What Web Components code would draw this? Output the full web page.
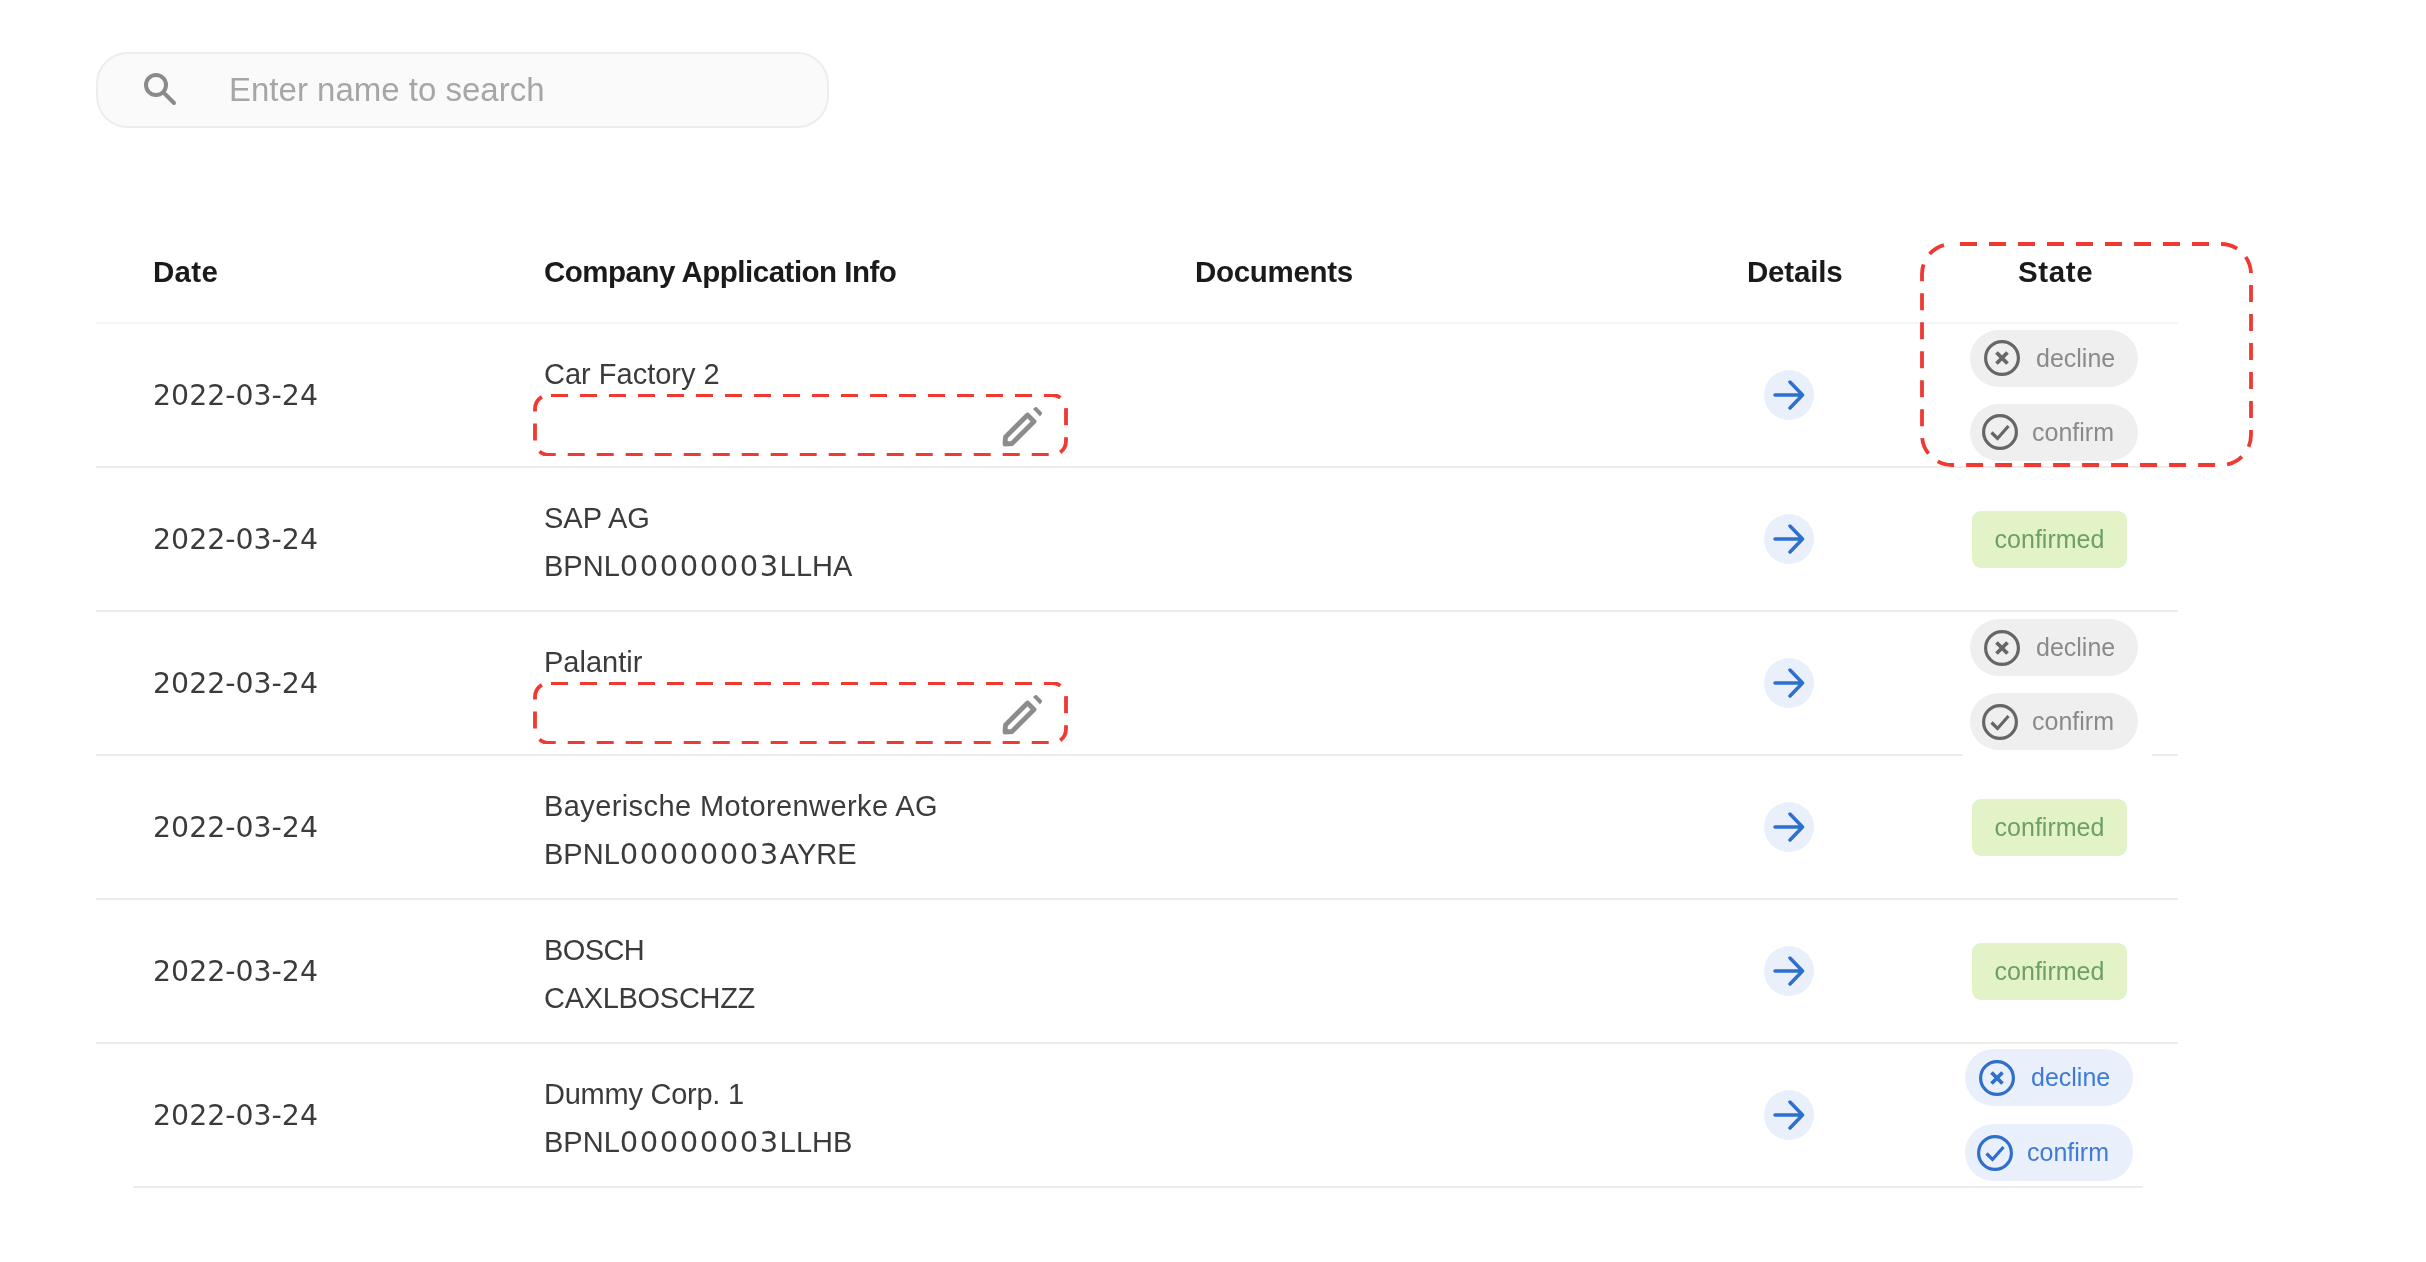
<!doctype html>
<html><head><meta charset="utf-8"><style>
html,body{margin:0;background:#fff}
body{font-family:"Liberation Sans",Arial,sans-serif;color:#3b3b3b}
</style></head><body>
<app-page>
  <search-field placeholder="Enter name to search"></search-field>
  <table-head></table-head>
  <row-rule soft></row-rule>
  <table-row date="2022-03-24" name="Car Factory 2" editable>
    <state-actions tone="grey"></state-actions>
  </table-row>
  <row-rule></row-rule>
  <table-row date="2022-03-24" name="SAP AG" code="BPNL00000003LLHA"><state-done></state-done></table-row>
  <row-rule></row-rule>
  <table-row date="2022-03-24" name="Palantir" editable>
    <state-actions tone="grey" low></state-actions>
  </table-row>
  <row-rule gap></row-rule>
  <table-row date="2022-03-24" name="Bayerische Motorenwerke AG" ls=".4" code="BPNL00000003AYRE"><state-done></state-done></table-row>
  <row-rule></row-rule>
  <table-row date="2022-03-24" name="BOSCH" ls="-.6" code="CAXLBOSCHZZ" cls="-.3"><state-done></state-done></table-row>
  <row-rule></row-rule>
  <table-row date="2022-03-24" name="Dummy Corp. 1" ls="-.25" code="BPNL00000003LLHB">
    <state-actions tone="blue"></state-actions>
  </table-row>
  <row-rule last></row-rule>
  <dash-frame></dash-frame>
</app-page>
<script>
const cols='grid-template-columns:448px 651px 552px 218px 213px;';
const def=(n,html)=>customElements.define(n,class extends HTMLElement{
  connectedCallback(){ if(this.shadowRoot)return; const s=this.attachShadow({mode:'open'}); s.innerHTML=typeof html==='function'?html(this):html; }
});
def('app-page',`<style>:host{display:block;position:relative;width:2426px;height:1262px;box-sizing:border-box;padding:52px 248px 0 96px;overflow:hidden;filter:blur(.7px)}</style><slot></slot>`);
def('search-field',el=>`<style>
:host{display:flex;align-items:center;box-sizing:border-box;width:733px;height:76px;border:2px solid #ededed;border-radius:32px;background:#fafafa;padding-left:42px;margin-bottom:95px}
svg{width:42px;height:42px;flex:none}
span{margin-left:47px;font-size:33px;color:#a6a6a6}
</style><svg viewBox="0 0 42 42" fill="none" stroke="#8a8a8a" stroke-width="4" stroke-linecap="round"><circle cx="16" cy="16" r="10"/><path d="M24 24 L34 34"/></svg><span>${el.getAttribute('placeholder')}</span>`);
def('table-head',`<style>
:host{display:grid;${cols}height:99px;align-items:center;font-weight:bold;font-size:29.5px;color:#1a1a1a}
div{padding-bottom:2px}
.d{padding-left:57px;letter-spacing:.3px}.s{padding-left:53px;letter-spacing:.6px}
.c{letter-spacing:-.5px}.o{letter-spacing:-.3px}.t{letter-spacing:-.2px}
</style><div class="d">Date</div><div class="c">Company Application Info</div><div class="o">Documents</div><div class="t">Details</div><div class="s">State</div>`);
def('table-row',el=>{
 const code=(el.getAttribute('code')||'').replace(/\d+/,m=>`<span class="n">${m}</span>`);
 return `<style>
:host{display:grid;${cols}height:142px;align-items:center;font-size:29px;color:#3b3b3b}
.d{padding-left:57px;font-family:"DejaVu Sans",sans-serif;font-size:28.4px}
.c{align-self:start;padding-top:26px;line-height:48px}
.c div{white-space:nowrap}
.n{font-family:"DejaVu Sans",sans-serif;letter-spacing:1.55px;font-size:29px}
.a{padding-left:17px}
</style><div class="d">${el.getAttribute('date')}</div>
<div class="c"><div style="letter-spacing:${el.getAttribute('ls')||0}px">${el.getAttribute('name')}</div>${el.hasAttribute('editable')?'<edit-box></edit-box>':`<div style="letter-spacing:${el.getAttribute('cls')||0}px">${code}</div>`}</div>
<div></div><div class="a"><go-arrow></go-arrow></div><div><slot></slot></div>`});
def('edit-box',`<style>
:host{display:flex;position:relative;box-sizing:border-box;width:535px;height:62px;margin:-4px 0 0 -11px;padding:13px 26px 0 0;justify-content:flex-end;align-items:flex-start}
.f{position:absolute;inset:0;width:100%;height:100%}
.p{width:40px;height:40px}
</style><svg class="f" viewBox="0 0 535 62" fill="none"><rect x="2" y="1" width="531" height="60" rx="14" stroke="#ee3a32" stroke-width="3.8" stroke-dasharray="17 12" stroke-dashoffset="-2"/></svg>
<svg class="p" viewBox="0 0 40 40" fill="none"><path d="M3 37 L3.500 30 L25.500 8 L32 14.500 L10 36.500 Z" stroke="#8c8c8c" stroke-width="4.800" stroke-linejoin="round"/><path d="M31 2 L34 -.5 L40.500 6 L38 9.500 Z" fill="#8c8c8c"/></svg>`);
def('go-arrow',`<style>
:host{display:flex;width:50px;height:50px;border-radius:50%;background:#e9f0fc;align-items:center;justify-content:center}
svg{width:32px;height:32px}
</style><svg viewBox="0 0 32 32" fill="none" stroke="#2f6fcc" stroke-width="3.500" stroke-linecap="round" stroke-linejoin="round"><path d="M2 16 H29 M17 3 L29.500 16 L17 29"/></svg>`);
def('state-actions',el=>{const b=el.getAttribute('tone')==='blue';return `<style>
:host{display:flex;flex-direction:column;gap:${b?18:17}px;width:168px;margin-left:${b?0:5}px;margin-top:${el.hasAttribute('low')?3:0}px}
</style><action-pill kind="decline" tone="${el.getAttribute('tone')}"></action-pill><action-pill kind="confirm" tone="${el.getAttribute('tone')}"></action-pill>`});
def('action-pill',el=>{
 const k=el.getAttribute('kind'),blue=el.getAttribute('tone')==='blue';
 const ic=blue?'#2f6fcc':'#666';
 const glyph=k==='decline'?'<path d="M12.500 12.500 L23.500 23.500 M23.500 12.500 L12.500 23.500" stroke-width="3.800"/>':'<path d="M9.500 18.500 L15.500 24.500 L26.500 12"/>';
 return `<style>
:host{display:flex;align-items:center;box-sizing:border-box;height:57px;border-radius:29px;background:${blue?'#e9f0fc':'#efefef'};padding-left:${k==='decline'?14:12}px;font-size:25px;color:${blue?'#3f7bd6':'#8a8a8a'}}
svg{width:36px;height:36px;flex:none}
span{margin-left:${k==='decline'?16:14}px}
</style><svg viewBox="0 0 36 36" fill="none" stroke="${ic}" stroke-width="3.200"><circle cx="18" cy="18" r="16.400"/>${glyph}</svg><span>${k}</span>`});
def('state-done',`<style>
:host{display:flex;align-items:center;justify-content:center;box-sizing:border-box;width:155px;height:57px;margin-left:7px;border-radius:9px;background:#e3f3c8;color:#6f9f62;font-size:25px}
</style>confirmed`);
def('row-rule',el=>{
 const last=el.hasAttribute('last'),soft=el.hasAttribute('soft');
 return `<style>
:host{display:flex;height:2px;${last?'margin:0 35px 0 37px;':''}}
i{display:block;height:2px;background:${soft?'#f5f5f5':'#ececec'}}
</style>${el.hasAttribute('gap')?'<i style="width:1867px"></i><i style="width:26px;margin-left:189px"></i>':'<i style="flex:1"></i>'}`});
def('dash-frame',`<style>
:host{position:absolute;left:1920px;top:242px;width:333px;height:225px;display:block}
svg{display:block}
</style><svg width="333" height="225" viewBox="0 0 333 225" fill="none"><rect x="2" y="2" width="329" height="221" rx="30" stroke="#ee3a32" stroke-width="3.800" stroke-dasharray="17 12" stroke-dashoffset="-8"/></svg>`);
</script>
</body></html>
